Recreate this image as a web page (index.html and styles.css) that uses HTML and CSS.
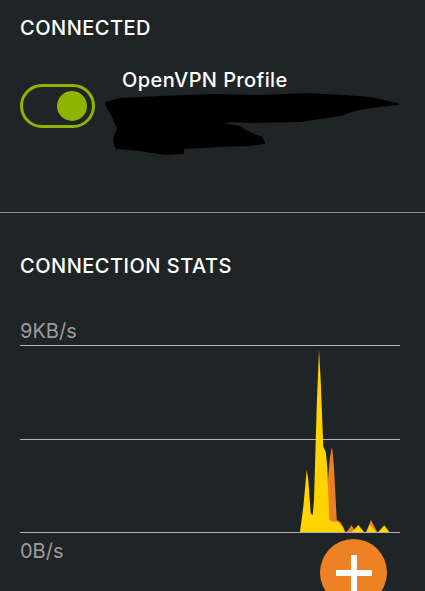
FILE: index.html
```html
<!DOCTYPE html>
<html lang="en">
<head>
    <meta charset="UTF-8" />
    <meta name="viewport" content="width=device-width, initial-scale=1" />
    <title>VPN Status</title>
    <link rel="stylesheet" href="styles.css">
</head>
<body>
    <main class="screen">
        <section class="panel connected">
            <h2 class="panel-title">CONNECTED</h2>

            <div class="profile">
                <div class="toggle on" role="switch" aria-checked="true">
                    <span class="knob"></span>
                </div>
                <div class="profile-info">
                    <div class="profile-name">OpenVPN Profile</div>
                    <div class="profile-detail"></div>
                </div>
            </div>

            <!-- hand-drawn redaction over the server address -->
            <svg class="redaction" width="300" height="70" viewBox="102 90 300 70" aria-hidden="true">
                <polygon fill="#000" stroke="#000" stroke-width="2" stroke-linejoin="round"
                    points="106,103 120,99 160,97 213,95 260,96 307,94 345,96 370,98 398,104 370,107 355,110 340,115 300,121 250,122 230,121 220,124 240,127 245,131 262,138 264,143 250,145 220,146 183,148 183,153 165,154 140,150 116,148 114,140 118,128 112,115 108,108"/>
            </svg>
        </section>

        <div class="divider"></div>

        <section class="panel stats">
            <h2 class="panel-title">CONNECTION STATS</h2>

            <div class="axis-label">9KB/s</div>
            <svg class="chart" width="380" height="188" viewBox="0 0 380 188">
                <g stroke="#b4b4b4" stroke-width="1">
                    <line x1="0" y1="0.5" x2="380" y2="0.5"/>
                    <line x1="0" y1="94.5" x2="380" y2="94.5"/>
                </g>
                <!-- bytes out -->
                <g fill="#ea8025">
                    <polygon points="306,187 307.3,141.7 310,111.7 312,101.7 314,121.7 316.7,175 320,176.7 323.3,181.7 325,187"/>
                    <polygon points="326.7,187 331.7,180 335,187"/>
                    <polygon points="346,187 351,175 357.3,187"/>
                </g>
                <!-- bytes in -->
                <g fill="#ffd400">
                    <polygon points="280,187 283.3,161.7 286.7,125 288.3,135 290.7,168.3 292.7,170 294,155 296.7,61.7 299,5 300.7,35 303.3,101.7 305.7,106.7 307.3,121.7 309.3,175 313.3,176.7 318.3,176.7 320.7,180 323.3,183.3 325,187"/>
                    <polygon points="331.7,187 338.3,180 344,187"/>
                    <polygon points="346.5,187 350,179.5 356,187"/>
                    <polygon points="358.3,187 364.3,180.3 369.3,187"/>
                </g>
                <line x1="0" y1="187.5" x2="380" y2="187.5" stroke="#b4b4b4" stroke-width="1"/>
            </svg>
            <div class="axis-label low">0B/s</div>

            <div class="totals">
                <span>BYTES IN</span>
                <span>BYTES OUT</span>
            </div>
        </section>

        <button class="fab" aria-label="Add profile">
            <svg width="36" height="36" viewBox="0 0 36 36">
                <rect x="0" y="15" width="36" height="6" fill="#fff"/>
                <rect x="15" y="0" width="6" height="36" fill="#fff"/>
            </svg>
        </button>
    </main>
</body>
</html>
```

FILE: styles.css
```css
body {
    margin: 0;
    background: #1f2427;
    font-family: Inter, Roboto, "Noto Sans", sans-serif;
    color: #fff;
    overflow: hidden;
}
.screen {
    position: relative;
    height: 591px;
    overflow: hidden;
}
.panel {
    padding: 0 20px;
}
.panel-title {
    margin: 0;
    font-size: 20px;
    line-height: 24px;
    font-weight: 500;
    letter-spacing: 0.5px;
    color: #fff;
}
.connected {
    position: relative;
    height: 212px;
    box-sizing: border-box;
    padding-top: 16px;
}
.profile {
    display: flex;
    align-items: flex-start;
    margin-top: 28px;
}
.toggle {
    display: flex;
    align-items: center;
    justify-content: flex-end;
    width: 75px;
    height: 44px;
    margin-top: 16px;
    padding-right: 5px;
    box-sizing: border-box;
    border: 3px solid #8cb400;
    border-radius: 22px;
}
.knob {
    width: 30px;
    height: 30px;
    border-radius: 50%;
    background: #8cb400;
}
.profile-info {
    margin-left: 27px;
}
.profile-name {
    font-size: 20px;
    line-height: 24px;
    font-weight: 500;
    letter-spacing: 0.4px;
}
.profile-detail {
    height: 56px;
}
.redaction {
    position: absolute;
    left: 102px;
    top: 90px;
}
.divider {
    height: 1px;
    background: #8c8c8c;
}
.stats {
    padding-top: 41px;
}
.axis-label {
    margin-top: 41px;
    margin-bottom: 2px;
    font-size: 20px;
    line-height: 24px;
    color: #9c9c9c;
}
.axis-label.low {
    margin-top: 6px;
    margin-bottom: 0;
}
.chart {
    display: block;
}
.totals {
    display: flex;
    justify-content: space-between;
    margin-top: 25px;
    font-size: 18px;
    line-height: 24px;
    font-weight: 500;
    color: #9c9c9c;
}
.fab {
    position: absolute;
    left: 320px;
    top: 539px;
    width: 67px;
    height: 67px;
    padding: 0;
    border: none;
    border-radius: 50%;
    background: #ee8124;
    display: flex;
    align-items: center;
    justify-content: center;
    cursor: pointer;
}
```
